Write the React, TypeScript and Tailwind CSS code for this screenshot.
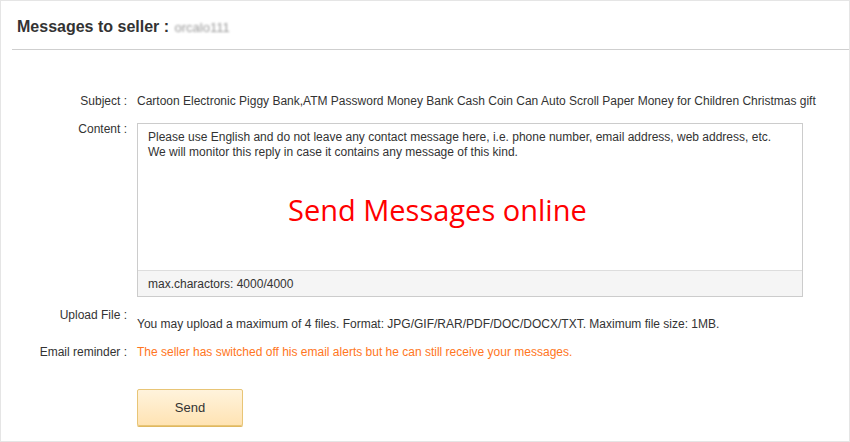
export default function App() {
  return (
    <div className="w-[850px] h-[442px] bg-white border border-[#e5e5e5] text-[#333] font-['Liberation_Sans',Arial,sans-serif] text-[12px] overflow-hidden">
      <div className="h-[49px] flex items-center pt-[4px] border-b border-[#cfcfcf] ml-[11px]">
        <h1 className="text-[16px] font-bold text-[#333] ml-[5px]">
          Messages to seller :{" "}
          <span className="text-[#9a9a9a] font-normal text-[13px] blur-[1.3px] ml-[1px]">orcalo111</span>
        </h1>
      </div>

      <div className="grid grid-cols-[126px_1fr] gap-x-[10px] pt-[44px]">
        <div className="text-right leading-[15px]">Subject :</div>
        <div className="leading-[15px]">
          Cartoon Electronic Piggy Bank,ATM Password Money Bank Cash Coin Can Auto Scroll Paper Money for Children Christmas gift
        </div>

        <div className="text-right leading-[15px] mt-[13px]">Content :</div>
        <div className="mt-[14px]">
          <div className="w-[666px] h-[174px] border border-[#ccc] flex flex-col">
            <div className="flex-1 px-[10px] pt-[6px] leading-[15px]">
              <p>Please use English and do not leave any contact message here, i.e. phone number, email address, web address, etc.</p>
              <p>We will monitor this reply in case it contains any message of this kind.</p>
              <p className="text-[#ff0000] font-['Open_Sans',sans-serif] text-[29px] leading-[40px] mt-[30px] ml-[140px]">
                Send Messages online
              </p>
            </div>
            <div className="h-[26px] bg-[#f5f5f5] border-t border-[#ddd] px-[10px] flex items-center">
              max.charactors: 4000/4000
            </div>
          </div>
        </div>

        <div className="text-right leading-[15px] mt-[11px]">Upload File :</div>
        <div className="leading-[15px] mt-[20px]">
          You may upload a maximum of 4 files. Format: JPG/GIF/RAR/PDF/DOC/DOCX/TXT. Maximum file size: 1MB.
        </div>

        <div className="text-right leading-[15px] mt-[13px]">Email reminder :</div>
        <div className="leading-[15px] mt-[13px] text-[#ff7622]">
          The seller has switched off his email alerts but he can still receive your messages.
        </div>

        <div></div>
        <div className="mt-[29px]">
          <button className="w-[106px] h-[37px] rounded-[2px] border border-[#e8c576] bg-gradient-to-b from-[#fff3dc] to-[#ffe3b3] text-[13px] text-[#333] shadow-[0_1px_0_#e0b860]">
            Send
          </button>
        </div>
      </div>
    </div>
  );
}
